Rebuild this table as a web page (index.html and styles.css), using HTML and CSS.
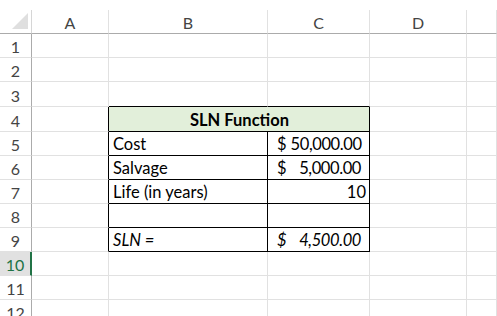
FILE: index.html
```html
<!DOCTYPE html>
<html>
<head>
<meta charset="utf-8">
<link rel="stylesheet" href="styles.css">
</head>
<body>
<div class="sheet">
  <div class="corner"><span class="tri"></span></div>
  <div class="ch">A</div>
  <div class="ch">B</div>
  <div class="ch">C</div>
  <div class="ch">D</div>
  <div class="ch"></div>

  <div class="rh">1</div><div class="c"></div><div class="c"></div><div class="c"></div><div class="c"></div><div class="c"></div>
  <div class="rh">2</div><div class="c"></div><div class="c"></div><div class="c"></div><div class="c"></div><div class="c"></div>
  <div class="rh">3</div><div class="c"></div><div class="c bb"></div><div class="c bb"></div><div class="c"></div><div class="c"></div>

  <div class="rh">4</div><div class="c br"></div><div class="c t title">SLN Function</div><div class="c"></div><div class="c"></div>
  <div class="rh">5</div><div class="c br"></div><div class="c t">Cost</div><div class="c t acc"><span>$</span><span class="amt">50,000.00</span></div><div class="c"></div><div class="c"></div>
  <div class="rh">6</div><div class="c br"></div><div class="c t">Salvage</div><div class="c t acc"><span>$</span><span class="amt">5,000.00</span></div><div class="c"></div><div class="c"></div>
  <div class="rh">7</div><div class="c br"></div><div class="c t">Life (in years)</div><div class="c t num">10</div><div class="c"></div><div class="c"></div>
  <div class="rh">8</div><div class="c br"></div><div class="c t"></div><div class="c t"></div><div class="c"></div><div class="c"></div>
  <div class="rh">9</div><div class="c br"></div><div class="c t it">SLN =</div><div class="c t acc it"><span>$</span><span class="amt">4,500.00</span></div><div class="c"></div><div class="c"></div>
  <div class="rh sel">10</div><div class="c"></div><div class="c"></div><div class="c"></div><div class="c"></div><div class="c"></div>
  <div class="rh">11</div><div class="c"></div><div class="c"></div><div class="c"></div><div class="c"></div><div class="c"></div>
  <div class="rh">12</div><div class="c"></div><div class="c"></div><div class="c"></div><div class="c"></div><div class="c"></div>
</div>
</body>
</html>
```
FILE: styles.css
```css
html, body {
  margin: 0;
  padding: 0;
  background: #fff;
  overflow: hidden;
}
body {
  width: 497px;
  height: 316px;
  padding-top: 10px;
  box-sizing: border-box;
  font-family: Lato, "Open Sans", sans-serif;
  font-size: 16.5px;
  color: #000;
}
.sheet {
  display: grid;
  grid-template-columns: 32px 77px 159px 102px 97px 1fr;
  grid-template-rows: 24px 24px 24px 25px 25px 24px 24px 24px 24px 24px 24px 24px 24px;
}
.sheet > div {
  box-sizing: border-box;
  display: flex;
  align-items: flex-end;
  line-height: 20px;
  overflow: hidden;
  white-space: nowrap;
}
.corner {
  border-right: 1px solid #d6d6d6;
  border-bottom: 1px solid #ababab;
  position: relative;
}
.tri {
  position: absolute;
  right: 3px;
  bottom: 4px;
  width: 0;
  height: 0;
  border-left: 16px solid transparent;
  border-bottom: 16px solid #dfdfdf;
}
.ch {
  justify-content: center;
  color: #444;
  font-size: 16px;
  border-right: 1px solid #e1e1e1;
  border-bottom: 1px solid #ababab;
}
.rh {
  justify-content: center;
  color: #444;
  font-size: 16px;
  border-right: 1px solid #ababab;
  border-bottom: 1px solid #e1e1e1;
}
.rh.sel {
  background: #e1e1e1;
  color: #217346;
  border-right: 2px solid #217346;
}
.c {
  border-right: 1px solid #e1e1e1;
  border-bottom: 1px solid #e1e1e1;
  padding: 0 3px 1px 4px;
}
.c.bb {
  border-bottom-color: #000;
}
.c.br {
  border-right-color: #000;
}
.c.t {
  border-right-color: #000;
  border-bottom-color: #000;
}
.title {
  grid-column: span 2;
  justify-content: center;
  font-weight: 700;
  background: #e2efda;
}
.acc {
  justify-content: space-between;
  gap: 4px;
  padding: 0 8px 1px 9px;
}
.amt {
  letter-spacing: -0.4px;
}
.num {
  justify-content: flex-end;
}
.it {
  font-style: italic;
}
```
